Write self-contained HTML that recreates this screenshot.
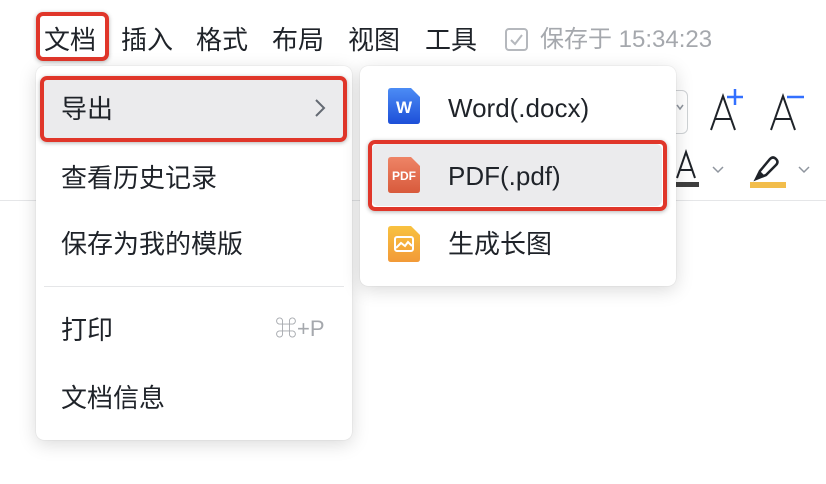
<!DOCTYPE html>
<html><head><meta charset="utf-8"><style>
body{margin:0;width:826px;height:484px;background:#fff;position:relative;overflow:hidden;font-family:"Liberation Sans","Noto Sans CJK SC",sans-serif;color:#1f2329}
.a{position:absolute}
.mb{top:21px;font-size:26px;line-height:38px}
.menu{background:#fff;border-radius:8px;box-shadow:0 4px 18px rgba(0,0,0,.15),0 0 1px rgba(0,0,0,.2)}
.it{position:absolute;font-size:26px;line-height:38px}
.red{position:absolute;border:4px solid #e0362a;border-radius:7px;box-sizing:border-box;box-shadow:0 1px 4px rgba(0,0,0,.3)}
</style></head><body>
<div class="a" style="left:0;top:200px;width:826px;height:1px;background:#e5e6e8"></div>
<div class="a" style="left:640px;top:90px;width:48px;height:44px;border:1px solid #d0d3d6;border-radius:6px;box-sizing:border-box"></div>
<svg class="a" style="left:675px;top:100px" width="10" height="14" viewBox="0 0 10 14"><path d="M2 5 L5 9 L8 5" fill="none" stroke="#8f959e" stroke-width="1.5"/></svg>
<svg class="a" style="left:708px;top:86px" width="120" height="50" viewBox="0 0 120 50"><path d="M3 44 L15 10 L27 44 M7 33 H23" fill="none" stroke="#1f2329" stroke-width="2"/><path d="M27 3 V19 M19 11 H35" stroke="#3370ff" stroke-width="2.5"/><path d="M63 44 L75 10 L87 44 M67 33 H83" fill="none" stroke="#1f2329" stroke-width="2"/><path d="M79 11 H96" stroke="#3370ff" stroke-width="2.5"/></svg>
<svg class="a" style="left:673px;top:148px" width="30" height="40" viewBox="0 0 30 40"><path d="M4 30 L13 4 L22 30 M7 22 H19" fill="none" stroke="#1f2329" stroke-width="2"/></svg>
<div class="a" style="left:675px;top:182px;width:24px;height:5px;background:#3f3f3f"></div>
<svg class="a" style="left:711px;top:164px" width="14" height="12" viewBox="0 0 14 12"><path d="M2 3 L7 8 L12 3" fill="none" stroke="#8f959e" stroke-width="1.5"/></svg>
<svg class="a" style="left:752px;top:153px" width="30" height="30" viewBox="0 0 30 30"><path d="M4 26 L8 18 L18 6 Q21 3 24 6 Q27 9 24 12 L14 22 Z" fill="none" stroke="#1f2329" stroke-width="2.5"/><path d="M4 26 L8 18 L12 22 Z" fill="#1f2329"/></svg>
<div class="a" style="left:750px;top:182px;width:36px;height:6px;background:#f2bd4b"></div>
<svg class="a" style="left:797px;top:164px" width="14" height="12" viewBox="0 0 14 12"><path d="M2 3 L7 8 L12 3" fill="none" stroke="#8f959e" stroke-width="1.5"/></svg>

<div class="a mb" style="left:44px">文档</div>
<div class="a mb" style="left:121px">插入</div>
<div class="a mb" style="left:196px">格式</div>
<div class="a mb" style="left:272px">布局</div>
<div class="a mb" style="left:348px">视图</div>
<div class="a mb" style="left:425px">工具</div>
<svg class="a" style="left:504px;top:27px" width="26" height="26" viewBox="0 0 26 26"><rect x="2" y="2" width="21" height="21" rx="3" fill="none" stroke="#b5b8bd" stroke-width="2"/><path d="M7 13 L11 17 L18 8" fill="none" stroke="#b5b8bd" stroke-width="2"/></svg>
<div class="a" style="left:540px;top:23px;font-size:24px;line-height:34px;color:#a5a8ad">保存于 15:34:23</div>
<div class="red" style="left:36px;top:12px;width:73px;height:49px"></div>

<div class="a menu" style="left:36px;top:66px;width:316px;height:374px"></div>
<div class="a" style="left:44px;top:78px;width:300px;height:62px;background:#ebebed;border-radius:6px"></div>
<div class="it" style="left:61px;top:90px">导出</div>
<svg class="a" style="left:313px;top:97px" width="14" height="22" viewBox="0 0 14 22"><path d="M3 3 L11 11 L3 19" fill="none" stroke="#646a73" stroke-width="2"/></svg>
<div class="red" style="left:40px;top:76px;width:307px;height:66px"></div>
<div class="it" style="left:61px;top:159px">查看历史记录</div>
<div class="it" style="left:61px;top:225px">保存为我的模版</div>
<div class="a" style="left:44px;top:286px;width:300px;height:1px;background:#e5e6e8"></div>
<div class="it" style="left:61px;top:311px">打印</div>
<div class="a" style="left:275px;top:313px;font-size:22px;line-height:32px;color:#a5a8ad">⌘+P</div>
<div class="it" style="left:61px;top:379px">文档信息</div>

<div class="a menu" style="left:360px;top:66px;width:316px;height:220px"></div>
<div class="a" style="left:372px;top:144px;width:290px;height:62px;background:#ebebed;border-radius:6px"></div>
<svg class="a" style="left:388px;top:88px" width="32" height="36" viewBox="0 0 32 36"><defs><linearGradient id="w" x1="0" y1="0" x2="0" y2="1"><stop offset="0" stop-color="#4c8cf5"/><stop offset="1" stop-color="#1d4fd8"/></linearGradient></defs><path d="M3 0 H23 L32 9 V33 Q32 36 29 36 H3 Q0 36 0 33 V3 Q0 0 3 0Z" fill="url(#w)"/><text x="16" y="25" font-size="17" font-weight="bold" fill="#fff" text-anchor="middle" font-family="Liberation Sans">W</text></svg>
<div class="it" style="left:448px;top:89px">Word(.docx)</div>
<svg class="a" style="left:388px;top:157px" width="32" height="36" viewBox="0 0 32 36"><defs><linearGradient id="p" x1="0" y1="0" x2="0" y2="1"><stop offset="0" stop-color="#ee8466"/><stop offset="1" stop-color="#d85a3c"/></linearGradient></defs><path d="M3 0 H23 L32 9 V33 Q32 36 29 36 H3 Q0 36 0 33 V3 Q0 0 3 0Z" fill="url(#p)"/><text x="16" y="23" font-size="12" font-weight="bold" fill="#fff" text-anchor="middle" font-family="Liberation Sans Narrow, Liberation Sans">PDF</text></svg>
<div class="it" style="left:448px;top:157px">PDF(.pdf)</div>
<div class="red" style="left:368px;top:140px;width:299px;height:71px"></div>
<svg class="a" style="left:388px;top:226px" width="32" height="36" viewBox="0 0 32 36"><defs><linearGradient id="g" x1="0" y1="0" x2="0" y2="1"><stop offset="0" stop-color="#f8c240"/><stop offset="1" stop-color="#f29a38"/></linearGradient></defs><path d="M3 0 H23 L32 9 V33 Q32 36 29 36 H3 Q0 36 0 33 V3 Q0 0 3 0Z" fill="url(#g)"/><rect x="7" y="11" width="18" height="14" rx="2" fill="none" stroke="#fff" stroke-width="2"/><path d="M8 22 L13 17 L17 20 L20 16 L24 20" fill="none" stroke="#fff" stroke-width="2"/></svg>
<div class="it" style="left:448px;top:225px">生成长图</div>
</body></html>
